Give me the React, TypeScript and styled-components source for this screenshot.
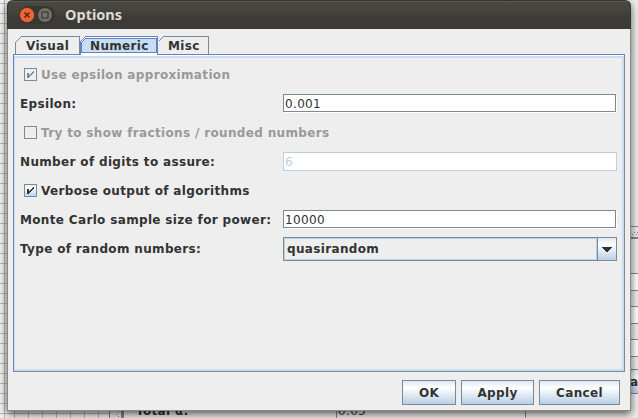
import React from "react";
import styled, { createGlobalStyle } from "styled-components";

const Global = createGlobalStyle`
  html, body { margin: 0; padding: 0; }
  body { width: 638px; height: 418px; overflow: hidden; background: #eee; }
  * { box-sizing: border-box; }
`;

const Desktop = styled.div`
  position: relative;
  width: 638px;
  height: 418px;
  overflow: hidden;
  background: #eee;
  font: bold 12px/17px "DejaVu Sans", sans-serif;
  letter-spacing: 0.34px;
  color: #333;
`;

/* The main window, mostly hidden by the dialog */
const GridSheet = styled.div`
  position: absolute;
  inset: 0 auto 0 0;
  width: 110px;
  border-right: 1px solid #7a8a99;
  background:
    linear-gradient(#b4b4b4, #b4b4b4) 4px 0 / 1px 100% no-repeat,
    repeating-linear-gradient(to bottom, transparent 0 3px, #b8b8b8 3px 4px, transparent 4px 10px),
    linear-gradient(#f2f2f2, #f2f2f2) 0 0 / 4px 100% no-repeat,
    repeating-linear-gradient(to right, #b8b8b8 0 1px, transparent 1px 14px),
    #f2f2f2;
`;
const Divider = styled.div`
  position: absolute;
  left: 110px;
  top: 0;
  bottom: 0;
  width: 14px;
  border-right: 3px solid #7a8a99;
  background: #eee;
`;
const DividerDots = styled.svg`
  position: absolute;
  left: 6px;
  bottom: 0;
`;
const BehindLabel = styled.div`
  position: absolute;
  left: 136px;
  top: 403px;
`;
const BehindField = styled.div`
  position: absolute;
  left: 336px;
  top: 401px;
  width: 190px;
  height: 20px;
  padding: 1px 1px;
  border: 1px solid #7a8a99;
  font-weight: normal;
`;
const SideStrip = styled.div`
  position: absolute;
  left: 626px;
  top: 226px;
  width: 12px;
  display: flex;
  flex-direction: column;
`;
const SideRow = styled.div<{ $h: number; $fill?: string; $line?: number }>`
  height: ${(p) => p.$h}px;
  background: ${(p) => p.$fill ?? "#eee"};
  border-top: ${(p) => p.$line ?? 1}px solid #7a8a99;
  padding-left: 4px;
  line-height: 24px;
`;
const SideDots = styled.svg`
  display: block;
`;

const Dialog = styled.div`
  position: absolute;
  left: 7px;
  top: 0;
  width: 624px;
  height: 411px;
  display: flex;
  flex-direction: column;
  border: 1px solid #8f8b80;
  border-top: 0;
  border-radius: 6px 6px 0 0;
  background: #eee;
  box-shadow: 0 3px 9px rgba(0, 0, 0, 0.65);
`;
const TitleBar = styled.header`
  flex: none;
  height: 29px;
  margin: 0 -1px;
  padding: 0 0 1px 11px;
  display: flex;
  align-items: center;
  border: 1px solid #35342f;
  border-width: 1px 1px 0;
  border-radius: 6px 6px 0 0;
  background: linear-gradient(#5b5a54 0 1px, #494843 1px, #44433e 40%, #3c3b37 60%, #3c3b37);
`;
const WindowButtons = styled.svg`
  display: block;
  width: 36px;
  height: 18px;
`;
const Title = styled.h1`
  margin: 0 0 2px 10px;
  font: bold 14.5px/20px "Noto Sans", sans-serif;
  letter-spacing: 0;
  color: #dfdbd2;
`;
const Body = styled.main`
  flex: 1;
  display: flex;
  flex-direction: column;
  padding: 7px 5px 6px 5px;
`;
const Tabs = styled.div`
  display: flex;
  height: 18px;
  padding-left: 2px;
`;
const Tab = styled.div<{ $w: number; $pad: number }>`
  position: relative;
  width: ${(p) => p.$w}px;
  height: 19px;
  padding: 2px 0 0 ${(p) => p.$pad}px;
  white-space: nowrap;
`;
const TabShape = styled.svg`
  position: absolute;
  inset: 0;
  overflow: visible;
`;
const TabCaption = styled.span`
  position: relative;
`;
const Panel = styled.section`
  height: 318px;
  border: 1px solid #7a8a99;
  border-top-color: #6382bf;
  border-left-color: #6382bf;
  background: #fff;
  padding-top: 1px;
`;
const PanelInner = styled.div`
  height: 315px;
  border: 2px solid #c8ddf2;
  border-left-width: 1px;
  background: #eee;
  padding: 2px 5px 0;
`;
const Row = styled.div<{ $off?: boolean }>`
  height: 29px;
  display: flex;
  align-items: center;
  color: ${(p) => (p.$off ? "#999" : "#333")};
`;
const Caption = styled.span`
  padding-top: 2px;
  white-space: nowrap;
`;
const LabelCell = styled.label`
  width: 263px;
  flex: none;
  padding-top: 2px;
  white-space: nowrap;
`;
const Box = styled.svg`
  display: block;
  flex: none;
  width: 13px;
  height: 13px;
  margin: 0 4px;
`;
const Field = styled.div<{ $off?: boolean }>`
  flex: none;
  width: 334px;
  height: 19px;
  padding: 1px 1px 0 1px;
  border: 1px solid ${(p) => (p.$off ? "#b8cfe5" : "#7a8a99")};
  background: #fff;
  color: ${(p) => (p.$off ? "#b8cfe5" : "#333")};
  font-weight: normal;
  ${(p) => (p.$off ? "" : "width: 333px; height: 18px; margin: 0 1px 1px 0; box-shadow: 1px 1px 0 #fff;")}
`;
const Combo = styled.div`
  flex: none;
  width: 334px;
  height: 24px;
  display: flex;
  border: 1px solid #7a8a99;
`;
const ComboValue = styled.div`
  flex: 1;
  border: 1px solid #b8cfe5;
  padding: 2px 0 0 2px;
`;
const ComboArrow = styled.div`
  width: 19px;
  border-left: 1px solid #7a8a99;
  background: linear-gradient(#dde8f3, #fff 30%, #b8cfe5);
  display: flex;
  align-items: center;
  justify-content: center;
  padding-top: 1px;
`;
const Actions = styled.footer`
  display: flex;
  justify-content: flex-end;
  gap: 5px;
  margin-top: 8px;
  padding-right: 5px;
`;
const Button = styled.button<{ $w: number }>`
  width: ${(p) => p.$w}px;
  height: 25px;
  padding: 2px 0 0;
  border: 1px solid #7a8a99;
  background: linear-gradient(#dde8f3, #fff 30%, #b8cfe5);
  font: inherit;
  letter-spacing: inherit;
  color: inherit;
`;

function Check({ on, off }: { on?: boolean; off?: boolean }) {
  return (
    <Box viewBox="0 0 13 13" shapeRendering="crispEdges">
      <defs>
        <linearGradient id="steel" x1="0" y1="0" x2="0" y2="1">
          <stop offset="0" stopColor="#dde8f3" />
          <stop offset=".3" stopColor="#fff" />
          <stop offset="1" stopColor="#b8cfe5" />
        </linearGradient>
      </defs>
      <rect x=".5" y=".5" width="12" height="12" fill={off ? "#eee" : "url(#steel)"} stroke="#7a8a99" />
      {on && (
        <path
          d="M3 5h2v5H3zM9 3h1v2H9zM8 4h1v2H8zM7 5h1v2H7zM6 6h1v2H6zM5 7h1v2H5z"
          fill={off ? "#7a8a99" : "#333"}
        />
      )}
    </Box>
  );
}

export default function App() {
  return (
    <Desktop>
      <Global />
      <GridSheet />
      <Divider>
        <DividerDots width="6" height="8" shapeRendering="crispEdges">
          <path d="M0 4h1v1H0zM2 2h1v1H2zM2 6h1v1H2z" fill="#7a8a99" />
        </DividerDots>
      </Divider>
      <BehindLabel>Total α:</BehindLabel>
      <BehindField>0.05</BehindField>
      <SideStrip>
        <SideRow $h={11}>
          <SideDots width="8" height="8" shapeRendering="crispEdges">
            <path d="M2 7h1v1H2zM4 5h1v1H4zM6 7h1v1H6zM7 5h1v1H7z" fill="#7a8a99" />
          </SideDots>
        </SideRow>
        <SideRow $h={36} $line={2} />
        <SideRow $h={17} $fill="#fff" />
        <SideRow $h={16} />
        <SideRow $h={17} $fill="#fff" />
        <SideRow $h={16} />
        <SideRow $h={17} $fill="#fff" />
        <SideRow $h={13} />
        <SideRow $h={24} $fill="linear-gradient(#dde8f3, #fff 30%, #b8cfe5)">ac</SideRow>
        <SideRow $h={26} />
      </SideStrip>

      <Dialog>
        <TitleBar>
          <WindowButtons viewBox="0 0 36 18">
            <rect width="36" height="18" rx="9" fill="#373631" />
            <circle cx="8" cy="9" r="7.5" fill="#ee6534" stroke="#2f2e2a" strokeWidth=".6" />
            <path d="M5.500 6.500l5 5m0-5l-5 5" stroke="#4a2216" strokeWidth="1.3" />
            <circle cx="26" cy="9" r="7.3" fill="#73726a" stroke="#2f2e2a" strokeWidth=".6" />
            <rect x="23" y="6" width="6" height="6" fill="none" stroke="#3a3935" strokeWidth="1.2" />
          </WindowButtons>
          <Title>Options</Title>
        </TitleBar>
        <Body>
          <Tabs>
            <Tab $w={65} $pad={11}>
              <TabShape width="65" height="19" shapeRendering="crispEdges">
                <path d="M.5 18V6.500l6-6h58V18" fill="none" stroke="#7a8a99" />
              </TabShape>
              <TabCaption>Visual</TabCaption>
            </Tab>
            <Tab $w={78} $pad={10}>
              <TabShape width="78" height="20" shapeRendering="crispEdges">
                <path d="M1 20V6l5-5.500h71V20z" fill="#fff" />
                <path d="M2 17V6l4-4h70v15z" fill="#c8ddf2" />
                <path d="M.5 18V5.500l5-5h72V18.500M1.500 16.500V6.500l4-4h71v14z" fill="none" stroke="#6382bf" />
              </TabShape>
              <TabCaption>Numeric</TabCaption>
            </Tab>
            <Tab $w={51} $pad={10}>
              <TabShape width="51" height="19" shapeRendering="crispEdges">
                <path d="M.5 5.500l5-5h45V18" fill="none" stroke="#7a8a99" />
              </TabShape>
              <TabCaption>Misc</TabCaption>
            </Tab>
          </Tabs>
          <Panel>
            <PanelInner>
              <Row $off><Check on off /><Caption>Use epsilon approximation</Caption></Row>
              <Row><LabelCell>Epsilon:</LabelCell><Field>0.001</Field></Row>
              <Row $off><Check off /><Caption>Try to show fractions / rounded numbers</Caption></Row>
              <Row><LabelCell>Number of digits to assure:</LabelCell><Field $off>6</Field></Row>
              <Row><Check on /><Caption>Verbose output of algorithms</Caption></Row>
              <Row><LabelCell>Monte Carlo sample size for power:</LabelCell><Field>10000</Field></Row>
              <Row>
                <LabelCell>Type of random numbers:</LabelCell>
                <Combo>
                  <ComboValue>quasirandom</ComboValue>
                  <ComboArrow>
                    <svg width="10" height="5" shapeRendering="crispEdges">
                      <path d="M0 0h10v1H0zM1 1h8v1H1zM2 2h6v1H2zM3 3h4v1H3zM4 4h2v1H4z" fill="#333" />
                    </svg>
                  </ComboArrow>
                </Combo>
              </Row>
            </PanelInner>
          </Panel>
          <Actions>
            <Button $w={54}>OK</Button>
            <Button $w={73}>Apply</Button>
            <Button $w={81}>Cancel</Button>
          </Actions>
        </Body>
      </Dialog>
    </Desktop>
  );
}
